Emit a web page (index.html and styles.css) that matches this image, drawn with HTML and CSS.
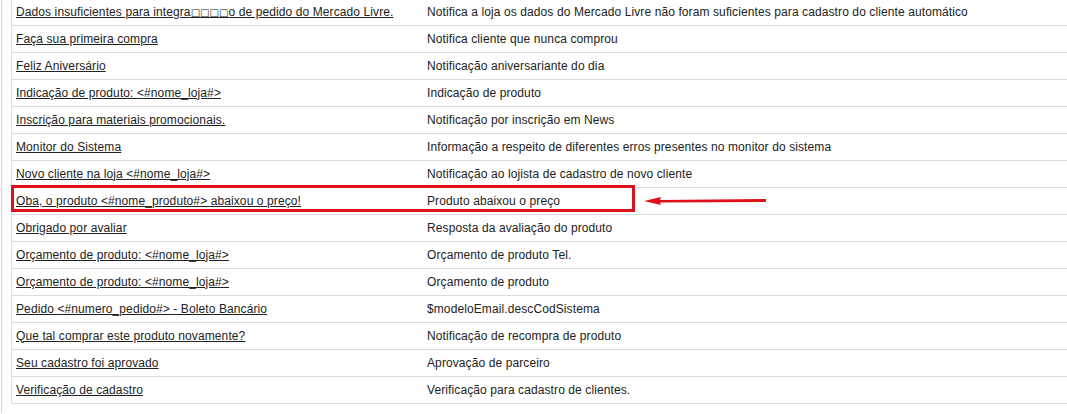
FILE: index.html
```html
<!DOCTYPE html>
<html lang="pt-BR">
<head>
<meta charset="utf-8">
<title>Modelos de e-mail</title>
<link rel="stylesheet" href="styles.css">
</head>
<body>
<div class="page">
  <table class="grid">
    <tbody>
      <tr><td class="c1"><a href="#">Dados insuficientes para integra<span class="tofu">□□□□</span>o de pedido do Mercado Livre.</a></td><td class="c2">Notifica a loja os dados do Mercado Livre não foram suficientes para cadastro do cliente automático</td></tr>
      <tr><td class="c1"><a href="#">Faça sua primeira compra</a></td><td class="c2">Notifica cliente que nunca comprou</td></tr>
      <tr><td class="c1"><a href="#">Feliz Aniversário</a></td><td class="c2">Notificação aniversariante do dia</td></tr>
      <tr><td class="c1"><a href="#">Indicação de produto: &lt;#nome_loja#&gt;</a></td><td class="c2">Indicação de produto</td></tr>
      <tr><td class="c1"><a href="#">Inscrição para materiais promocionais.</a></td><td class="c2">Notificação por inscrição em News</td></tr>
      <tr><td class="c1"><a href="#">Monitor do Sistema</a></td><td class="c2">Informação a respeito de diferentes erros presentes no monitor do sistema</td></tr>
      <tr><td class="c1"><a href="#">Novo cliente na loja &lt;#nome_loja#&gt;</a></td><td class="c2">Notificação ao lojista de cadastro de novo cliente</td></tr>
      <tr><td class="c1"><a href="#">Oba, o produto &lt;#nome_produto#&gt; abaixou o preço!</a></td><td class="c2">Produto abaixou o preço</td></tr>
      <tr><td class="c1"><a href="#">Obrigado por avaliar</a></td><td class="c2">Resposta da avaliação do produto</td></tr>
      <tr><td class="c1"><a href="#">Orçamento de produto: &lt;#nome_loja#&gt;</a></td><td class="c2">Orçamento de produto Tel.</td></tr>
      <tr><td class="c1"><a href="#">Orçamento de produto: &lt;#nome_loja#&gt;</a></td><td class="c2">Orçamento de produto</td></tr>
      <tr><td class="c1"><a href="#">Pedido &lt;#numero_pedido#&gt; - Boleto Bancário</a></td><td class="c2">$modeloEmail.descCodSistema</td></tr>
      <tr><td class="c1"><a href="#">Que tal comprar este produto novamente?</a></td><td class="c2">Notificação de recompra de produto</td></tr>
      <tr><td class="c1"><a href="#">Seu cadastro foi aprovado</a></td><td class="c2">Aprovação de parceiro</td></tr>
      <tr><td class="c1"><a href="#">Verificação de cadastro</a></td><td class="c2">Verificação para cadastro de clientes.</td></tr>
    </tbody>
  </table>
  <div class="highlight"></div>
  <svg class="arrow" width="130" height="14" viewBox="0 0 130 14" aria-hidden="true">
    <path d="M2 7 L19 3 L18 6 L124 5 L124 8 L18 8.5 L19 11 Z" fill="#e0101a"/>
  </svg>
</div>
</body>
</html>
```

FILE: styles.css
```css
html, body {
  margin: 0;
  padding: 0;
  background: #ffffff;
  overflow: hidden;
}

body {
  width: 1067px;
  height: 414px;
}

.page {
  position: relative;
  margin-left: 1px;
  border-left: 1px solid #d6d6d6;
  padding-left: 9px;
  height: 414px;
  box-sizing: border-box;
  font-family: "Liberation Sans", Arial, sans-serif;
  font-size: 12px;
  letter-spacing: 0.1px;
  color: #222222;
}

.grid {
  border-collapse: collapse;
  width: 1070px;
  margin-top: -1px;
  border-left: 1px solid #dcdcdc;
  table-layout: fixed;
}

.grid td {
  height: 26px;
  padding: 0 0 0 4px;
  border-bottom: 1px solid #dcdcdc;
  vertical-align: middle;
  white-space: nowrap;
  line-height: 15px;
}

.grid td.c1 {
  width: 407px;
}

.grid a {
  color: #222222;
  text-decoration: underline;
}

.tofu {
  font-family: "DejaVu Sans", sans-serif;
  font-size: 10px;
  letter-spacing: 0;
}

.highlight {
  position: absolute;
  left: 9px;
  top: 186px;
  width: 618px;
  height: 21px;
  border: 3px solid #e0101a;
}

.arrow {
  position: absolute;
  left: 640px;
  top: 195px;
}
```
